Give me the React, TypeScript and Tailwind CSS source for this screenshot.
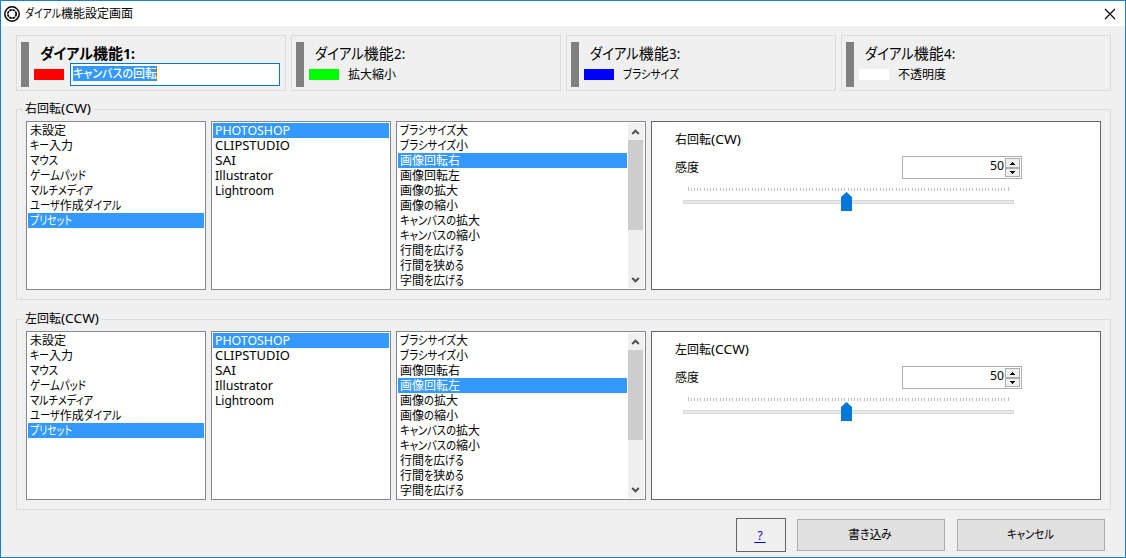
import { useLayoutEffect, useRef, useState } from "react";

const KANJI = /[\u4e00-\u9fff]/;

function splitRuns(text: string) {
  const runs: { s: string; kanji: boolean }[] = [];
  for (const ch of text) {
    const kanji = KANJI.test(ch);
    const last = runs[runs.length - 1];
    if (last && last.kanji === kanji) last.s += ch;
    else runs.push({ s: ch, kanji });
  }
  return runs;
}

/* Keeps ideographs full width and condenses kana and Latin runs so the label is `w` pixels wide. */
function Label({ text, w, className = "" }: { text: string; w: number; className?: string }) {
  const ref = useRef<HTMLSpanElement>(null);
  const [fit, setFit] = useState<{ k: number; widths: number[] } | null>(null);
  const runs = splitRuns(text);
  useLayoutEffect(() => {
    const el = ref.current;
    if (!el) return;
    const inner = Array.from(el.querySelectorAll<HTMLElement>("[data-run]"));
    const widths = inner.map((n) => n.getBoundingClientRect().width);
    let fixed = 0;
    let flexible = 0;
    runs.forEach((r, i) => (r.kanji ? (fixed += widths[i]) : (flexible += widths[i])));
    if (flexible > 0) setFit({ k: (w - fixed) / flexible, widths });
  }, []);
  return (
    <span ref={ref} className={"inline-flex whitespace-nowrap " + className}>
      {runs.map((r, i) => {
        const scaled = fit && !r.kanji;
        return (
          <span key={i} className="inline-block" style={scaled ? { width: fit.widths[i] * fit.k } : undefined}>
            <span
              data-run
              className="inline-block origin-left"
              style={scaled ? { transform: `scaleX(${fit.k})` } : undefined}
            >
              {r.s}
            </span>
          </span>
        );
      })}
    </span>
  );
}

type Item = [string, number];

const categories: Item[] = [
  ["未設定", 36],
  ["キー入力", 43],
  ["マウス", 28],
  ["ゲームパッド", 56],
  ["マルチメディア", 63],
  ["ユーザ作成ダイアル", 91],
  ["プリセット", 42],
];
const apps: Item[] = [
  ["PHOTOSHOP", 75],
  ["CLIPSTUDIO", 75],
  ["SAI", 21],
  ["Illustrator", 58],
  ["Lightroom", 59],
];
const actions: Item[] = [
  ["ブラシサイズ大", 68],
  ["ブラシサイズ小", 68],
  ["画像回転右", 60],
  ["画像回転左", 60],
  ["画像の拡大", 58],
  ["画像の縮小", 58],
  ["キャンバスの拡大", 80],
  ["キャンバスの縮小", 80],
  ["行間を広げる", 64],
  ["行間を狭める", 64],
  ["字間を広げる", 64],
];

function Rows({ items, selected }: { items: Item[]; selected: number }) {
  return (
    <div className="min-w-0 flex-1">
      {items.map(([t, w], i) => (
        <div key={t} className={"flex h-[15px] items-center pl-[2px] leading-[15px] " + (i === selected ? "bg-[#3399ff] text-white" : "")}>
          <Label text={t} w={w} />
        </div>
      ))}
    </div>
  );
}

function ScrollBar() {
  return (
    <div className="ml-px flex w-4 flex-col bg-[#f0f0f0]">
      <svg className="h-[17px] w-[15px]" viewBox="0 0 15 17">
        <path d="M4.2 11 7.5 7.7 10.8 11" fill="none" stroke="#505050" strokeWidth="2" />
      </svg>
      <div className="h-[90px] w-[15px] bg-[#cdcdcd]" />
      <div className="flex-1" />
      <svg className="h-[17px] w-[15px]" viewBox="0 0 15 17">
        <path d="M4.2 7 7.5 10.3 10.8 7" fill="none" stroke="#505050" strokeWidth="2" />
      </svg>
    </div>
  );
}

function Spinner() {
  return (
    <div className="flex h-[23px] w-[120px] justify-end border border-[#abadb3] bg-white pt-px pr-px">
      <span className="mr-px leading-[16px]">
        <Label text="50" w={14} />
      </span>
      <div className="flex h-[19px] w-[15px] flex-col">
        <div className="flex h-[10px] items-center justify-center border border-[#acacac] bg-[#f0f0f0]">
          <svg className="h-[3px] w-[5px]" viewBox="0 0 5 3" shapeRendering="crispEdges">
            <path d="M2 0h1v1h1v1h1v1H0V2h1V1h1z" />
          </svg>
        </div>
        <div className="flex h-[9px] items-center justify-center border border-[#acacac] bg-[#f0f0f0]">
          <svg className="h-[3px] w-[5px]" viewBox="0 0 5 3" shapeRendering="crispEdges">
            <path d="M2 3h1V2h1V1h1V0H0v1h1v1h1z" />
          </svg>
        </div>
      </div>
    </div>
  );
}

function Slider() {
  return (
    <svg className="mt-[8px] ml-[31px] block h-[24px] w-[331px]" viewBox="0 0 331 24" shapeRendering="crispEdges">
      {Array.from({ length: 101 }, (_, i) => {
        const end = i === 0 || i === 100;
        return (
          <rect key={i} x={5 + Math.floor(i * 3.2)} y={end ? 0 : 1} width="1" height={end ? 4 : 3} fill="#bfbfbf" />
        );
      })}
      <rect x="0.5" y="13.5" width="330" height="3" fill="#e7eaea" stroke="#d6d6d6" />
      <path d="M158 24V10L163.500 5 169 10V24z" fill="#0078d7" shapeRendering="auto" />
    </svg>
  );
}

function Group({ title, titleWidth, selected }: { title: string; titleWidth: number; selected: number }) {
  const list = "flex h-[169px] border border-[#828790] bg-white p-px";
  return (
    <section className="h-[210px]">
      <div className="flex h-[19px] items-center">
        <div className="h-[10px] w-[7px] self-end rounded-none border-t border-l border-[#dcdcdc]" />
        <div className="px-[2px] pb-[2px] leading-[17px]">
          <Label text={title} w={titleWidth} />
        </div>
        <div className="ml-px h-[10px] flex-1 self-end border-t border-r border-[#dcdcdc]" />
      </div>
      <div className="flex h-[181px] gap-[5px] border-x border-b border-[#dcdcdc] px-[9px] pt-[2px]">
        <div className={list + " w-[180px]"}>
          <Rows items={categories} selected={6} />
        </div>
        <div className={list + " w-[180px]"}>
          <Rows items={apps} selected={0} />
        </div>
        <div className={list + " w-[250px]"}>
          <Rows items={actions} selected={selected} />
          <ScrollBar />
        </div>
        <div className="h-[169px] w-[450px] border border-[#646464] bg-white">
          <div className="flex h-[34px] items-end pl-[23px]">
            <div className="leading-[32px]">
              <Label text={title} w={titleWidth} />
            </div>
          </div>
          <div className="flex h-[23px] pl-[23px]">
            <div className="w-[227px] leading-[23px]">感度</div>
            <Spinner />
          </div>
          <Slider />
        </div>
      </div>
    </section>
  );
}

const dials = [
  { n: 1, color: "bg-[#ff0000]", name: "キャンバスの回転", w: 84 },
  { n: 2, color: "bg-[#00ff00]", name: "拡大縮小", w: 48 },
  { n: 3, color: "bg-[#0000ff]", name: "ブラシサイズ", w: 56 },
  { n: 4, color: "bg-white", name: "不透明度", w: 48 },
];

export default function App() {
  return (
    <div className="flex h-[558px] w-[1126px] flex-col border border-[#1a80d0] bg-[#f0f0f0] font-['Noto_Sans','Noto_Sans_CJK_JP',sans-serif] text-[12px] text-black [font-feature-settings:'palt']">
      <header className="flex h-[25px] items-center bg-white pl-[3px]">
        <svg className="h-4 w-4" viewBox="0 0 16 16" fill="none" stroke="#000">
          <circle cx="8" cy="8" r="7.2" strokeWidth="1.5" />
          <circle cx="8" cy="8" r="4.2" strokeWidth="1.7" strokeDasharray="2.6 .7" />
        </svg>
        <div className="ml-[5px] leading-[24px]">
          <Label text="ダイアル機能設定画面" w={108} />
        </div>
        <svg className="mr-[9px] ml-auto h-[12px] w-[12px]" viewBox="0 0 12 12" fill="none" stroke="#000" strokeWidth="1.2">
          <path d="M1 1 11 11M11 1 1 11" />
        </svg>
      </header>

      <div className="mt-[9px] ml-[15px] flex gap-[5px]">
        {dials.map((d) => (
          <div key={d.n} className="flex h-[56px] w-[270px] border border-[#dcdcdc] pt-[6px] pl-[4px]">
            <div className="h-[45px] w-2 bg-[#808080]" />
            <div className="ml-[5px] flex-1">
              <div className={"h-[21px] pl-[6px] text-[15px] leading-[22px] " + (d.n === 1 ? "font-bold" : "")}>
                <Label text={`ダイアル機能${d.n}:`} w={d.n === 1 ? 95 : 90} />
              </div>
              <div className="flex">
                <div className={"mt-[6px] h-[11px] w-[30px] " + d.color} />
                {d.n === 1 ? (
                  <div className="ml-[6px] h-[23px] w-[210px] border border-[#0078d7] bg-white pt-[2px] pl-[2px]">
                    <div className="flex h-[15px] w-[84px] items-center border-r border-[#cc6600] bg-[#3399ff] leading-[15px] font-medium text-white">
                      <Label text={d.name} w={d.w} />
                    </div>
                  </div>
                ) : (
                  <div className="ml-[9px] leading-[23px]">
                    <Label text={d.name} w={d.w} />
                  </div>
                )}
              </div>
            </div>
          </div>
        ))}
      </div>

      <main className="mt-[9px] mr-[14px] ml-[15px]">
        <Group title="右回転(CW)" titleWidth={66} selected={2} />
        <Group title="左回転(CCW)" titleWidth={74} selected={3} />
      </main>

      <footer className="mt-[-2px] mr-[20px] flex items-center justify-end">
        <a className="flex h-[34px] w-[50px] items-center justify-center border border-[#646464] pt-px pr-[2px] text-[#0000ff] underline underline-offset-2">
          <span>&nbsp;?&nbsp;</span>
        </a>
        <button className="ml-[11px] flex h-[32px] w-[148px] items-center justify-center border border-[#adadad] bg-[#e1e1e1] pr-[2px]">
          <Label text="書き込み" w={44} />
        </button>
        <button className="ml-[12px] flex h-[32px] w-[148px] items-center justify-center border border-[#adadad] bg-[#e1e1e1] pr-[2px]">
          <Label text="キャンセル" w={47} />
        </button>
      </footer>
    </div>
  );
}
